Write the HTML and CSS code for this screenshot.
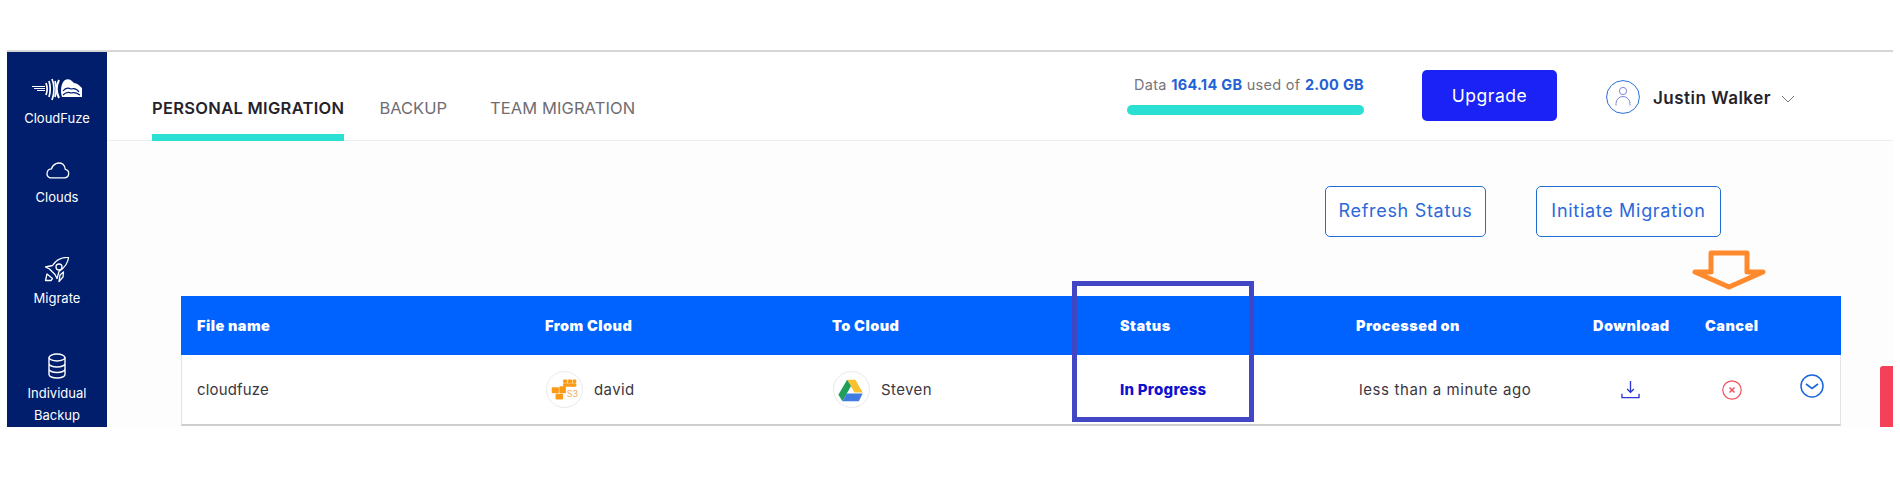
FILE: index.html
```html
<!DOCTYPE html>
<html lang="en">
<head>
<meta charset="utf-8">
<title>CloudFuze - Personal Migration</title>
<link rel="stylesheet" href="styles.css">
</head>
<body>
<div class="screen">
  <nav class="sidebar">
    <a class="nav-item nav-brand">
      <svg class="ico-logo" viewBox="0 0 52 24" fill="none" stroke="#fff">
        <path d="M1 9.500h13M3 11.500h11M6 13.500h8" stroke-width="1"/>
        <path d="M15 6c1.500 4 1.500 8 0 12M18 4c1.500 5 1.500 11 0 16M21 2c2.500 6 2.500 14 0 21M24 4c1.500 5 1.500 11 0 16" stroke-width="1.700"/>
        <path d="M28 3c-3 6-3 12 0 18" stroke-width="2"/>
        <path d="M31 20c-2-6-1-14 3-17 4-2 7 1 9 3 3 0 6 3 8 5v9z" fill="#fff" stroke="none"/>
        <path d="M32 14c3-4 6-3 8-2 3-1 6 0 8 3M32 18c3-3 6-3 8-2 3-1 6 0 9 2" stroke="#001e6c" stroke-width="1.200"/>
      </svg>
      <span>CloudFuze</span>
    </a>
    <a class="nav-item nav-clouds">
      <svg class="ico-cloud" viewBox="0 0 26 18" fill="none" stroke="#fff" stroke-width="1.300">
        <path d="M6 16.800h14.500a4.300 4.300 0 0 0 .8-8.500 8 8 0 0 0-2.300-5 7.500 7.500 0 0 0-11.500 4.600 4.600 4.600 0 0 0-1.500 8.900z"/>
      </svg>
      <span>Clouds</span>
    </a>
    <a class="nav-item nav-migrate">
      <svg class="ico-rocket" viewBox="0 0 26 26" fill="none" stroke="#fff" stroke-width="1.300" stroke-linejoin="round">
        <path d="M24.500 1c-7-.5-12 2-16 8l-7 1.500 4 2 5.500 5.500 2 4 2-7c5-3.500 9-7.500 9.500-14z" transform="translate(0 -.5)"/>
        <circle cx="15" cy="10" r="3"/>
        <path d="M3 17l-1.500 6.500h5.500l1.500-2zM16 18l-1 6.500 4-4.500.5-5z"/>
      </svg>
      <span>Migrate</span>
    </a>
    <a class="nav-item nav-backup">
      <svg class="ico-db" viewBox="0 0 18 26" fill="none" stroke="#fff" stroke-width="1.400">
        <ellipse cx="9" cy="4.500" rx="8" ry="3.500"/>
        <path d="M1 4.500v17c0 2 3.500 3.500 8 3.500s8-1.500 8-3.500v-17M1 10.500c0 2 3.500 3.500 8 3.500s8-1.500 8-3.500M1 16c0 2 3.500 3.500 8 3.500s8-1.500 8-3.500"/>
      </svg>
      <span>Individual<br>Backup</span>
    </a>
  </nav>

  <div class="main">
    <header class="topbar">
      <div class="tabs">
        <a class="tab tab-active">PERSONAL MIGRATION</a>
        <a class="tab">BACKUP</a>
        <a class="tab">TEAM MIGRATION</a>
      </div>
      <div class="usage">
        <p class="usage-text">Data <b>164.14 GB</b> used of <b>2.00 GB</b></p>
        <div class="usage-bar"></div>
      </div>
      <button class="btn-upgrade">Upgrade</button>
      <div class="user">
        <svg class="ico-user" viewBox="0 0 34 34" fill="none">
          <circle cx="17" cy="17" r="16.400" stroke="#2a6fd6" stroke-width="1"/>
          <circle cx="17" cy="11" r="3.600" stroke="#7f86dc" stroke-width="1"/>
          <path d="M10 25.500v-2a7 7 0 0 1 14 0v2" stroke="#7f86dc" stroke-width="1"/>
        </svg>
        <span class="user-name">Justin Walker</span>
        <svg class="ico-chev" viewBox="0 0 14 8" fill="none" stroke="#777" stroke-width="1"><path d="M1 1l6 6 6-6"/></svg>
      </div>
    </header>

    <section class="content">
      <div class="actions">
        <button class="btn-outline btn-refresh">Refresh Status</button>
        <button class="btn-outline btn-initiate">Initiate Migration</button>
      </div>
      <div class="table">
        <div class="row row-head">
          <div>File name</div>
          <div>From Cloud</div>
          <div>To Cloud</div>
          <div>Status</div>
          <div>Processed on</div>
          <div>Download</div>
          <div>Cancel</div>
          <div></div>
        </div>
        <div class="row row-body">
          <div>cloudfuze</div>
          <div class="cloud-cell">
            <span class="cloud-badge">
              <svg viewBox="0 0 37 37">
                <g fill="#fb9a14">
                  <rect x="17" y="8" width="4.500" height="3.500" rx="1"/><rect x="22" y="8" width="4.500" height="3.500" rx="1"/><rect x="27" y="8" width="4" height="3.500" rx="1"/>
                  <rect x="17" y="12" width="14" height="3.500" rx="1"/>
                  <rect x="5" y="16" width="7.500" height="6.500" rx="1"/><rect x="13" y="15" width="7" height="7.500" rx="1"/>
                  <rect x="9" y="23" width="8" height="6" rx="1"/>
                </g>
                <text class="s3-mark" x="21" y="26">S3</text>
              </svg>
            </span>
            <span>david</span>
          </div>
          <div class="cloud-cell">
            <span class="cloud-badge">
              <svg viewBox="0 0 36 36">
                <path d="M13.500 8h8.500l7.500 13h-8.500z" fill="#fbc02d"/>
                <path d="M13.500 8l-9 15.500 4.200 6.500 8.800-15.500z" fill="#1e9e57"/>
                <path d="M8.700 30l4.300-8h16.500l-4 8z" fill="#3f7be0"/>
              </svg>
            </span>
            <span>Steven</span>
          </div>
          <div class="status">In Progress</div>
          <div class="processed">less than a minute ago</div>
          <div class="cell-icon cell-download">
            <svg class="ico-download" viewBox="0 0 20 20" fill="none" stroke="#2b35d6" stroke-width="1.400">
              <path d="M10 1v12M6.500 9.500l3.500 3.500 3.500-3.500M1 14.500v4h18v-4"/>
            </svg>
          </div>
          <div class="cell-icon cell-cancel">
            <svg class="ico-cancel" viewBox="0 0 20 20" fill="none" stroke="#f0525f">
              <circle cx="10" cy="10" r="9.200" stroke-width="1.200"/>
              <path d="M7.500 7.500l5 5M12.500 7.500l-5 5" stroke-width="1.500"/>
            </svg>
          </div>
          <div class="cell-icon">
            <svg class="ico-expand" viewBox="0 0 24 24" fill="none" stroke="#1c66dc" stroke-width="1.500">
              <circle cx="12" cy="12" r="11"/>
              <path d="M6 10l6 4.500 6-4.500" stroke-width="1.700"/>
            </svg>
          </div>
        </div>
      </div>
    </section>
  </div>

  <div class="status-highlight"></div>
  <svg class="arrow" viewBox="0 0 74 40" fill="none" stroke="#ff8a2d" stroke-width="5" stroke-linejoin="round">
    <path d="M19 3h36v19h16l-34 15-34-15h16z"/>
  </svg>
  <div class="side-flag"></div>
</div>
</body>
</html>
```
FILE: styles.css
```css
* { box-sizing: border-box; }
html, body { margin: 0; height: 100%; background: #fff; overflow: hidden; }
body { padding: 50px 7px 0; font-family: "Inter", "Liberation Sans", sans-serif; color: #2c2833; }
p { margin: 0; }
button { font-family: inherit; cursor: pointer; }

.screen {
  position: relative;
  display: flex;
  height: 377px;
  border-top: 2px solid #d6d6d6;
  overflow: hidden;
  background: #fdfdfe;
}

.sidebar {
  flex: 0 0 100px;
  background: #001e6c;
  color: #fff;
  text-align: center;
  font-size: 13px;
  line-height: 22px;
}
.nav-item { display: flex; flex-direction: column; align-items: center; }
.nav-item svg { display: block; }
.nav-brand { padding-top: 25px; }
.ico-logo { width: 52px; height: 24px; margin-bottom: 6px; }
.nav-clouds { padding-top: 32px; }
.ico-cloud { width: 26px; height: 18px; margin-bottom: 7px; }
.nav-migrate { padding-top: 49px; }
.ico-rocket { width: 26px; height: 26px; margin-bottom: 4px; }
.nav-backup { padding-top: 44px; }
.ico-db { width: 18px; height: 26px; margin-bottom: 3px; }

.main { flex: 1; display: flex; flex-direction: column; min-width: 0; }

.topbar {
  display: flex;
  align-items: stretch;
  height: 89px;
  padding-left: 45px;
  background: #fff;
  border-bottom: 1px solid #efeff2;
}
.tabs { display: flex; gap: 35px; align-items: stretch; }
.tab {
  display: flex;
  align-items: center;
  height: 89px;
  padding-top: 30px;
  font-size: 16.500px;
  color: #6f6d72;
  border-bottom: 7px solid transparent;
}
.tab:nth-child(3) { margin-left: 8px; letter-spacing: .1px; }
.tab-active { font-weight: 600; color: #25222c; border-bottom-color: #2bdfd2; letter-spacing: .3px; }

.usage { margin-left: auto; width: 237px; padding-top: 23px; }
.usage-text { text-align: right; font-size: 14.500px; line-height: 19px; letter-spacing: .3px; color: #77757b; white-space: nowrap; }
.usage-text b { color: #1f62d6; font-weight: 700; }
.usage-bar { height: 10px; margin-top: 11px; border-radius: 5px; background: #2bdfd2; }

.btn-upgrade {
  align-self: flex-start;
  width: 135px;
  height: 51px;
  margin: 18px 0 0 58px;
  border: 0;
  border-radius: 5px;
  background: #1a22f5;
  color: #fff;
  font-size: 17.500px;
  letter-spacing: .5px;
}

.user { flex: 0 0 287px; display: flex; align-items: flex-start; margin-left: 49px; padding-top: 28px; }
.ico-user { width: 34px; height: 34px; display: block; }
.user-name { margin: 8px 0 0 13px; font-size: 17px; line-height: 20px; font-weight: 600; color: #25222c; letter-spacing: .5px; white-space: nowrap; }
.ico-chev { width: 14px; height: 8px; margin: 15px 0 0 10px; display: block; }

.content { flex: 1; padding: 45px 0 0 74px; }
.actions { display: flex; gap: 50px; padding-left: 1144px; }
.btn-outline {
  height: 51px;
  padding: 0 0 2px;
  border: 1px solid #1e6fd0;
  border-radius: 5px;
  background: #fff;
  color: #2c68da;
  font-size: 18px;
  letter-spacing: .7px;
  white-space: nowrap;
}
.btn-refresh { width: 161px; }
.btn-initiate { width: 185px; }

.table { width: 1660px; margin-top: 59px; }
.row {
  display: grid;
  grid-template-columns: 348px 287px 288px 236px 237px 112px 120px 16px;
  align-items: center;
  padding-left: 16px;
  white-space: nowrap;
}
.row-head { height: 59px; background: #0062ff; color: #fff; font-size: 14.500px; font-weight: 900; letter-spacing: .45px; }
.row-body {
  height: 71px;
  background: #fff;
  border-left: 1px solid #e4e4e8;
  border-right: 1px solid #e4e4e8;
  border-bottom: 2px solid #cfcfd2;
  padding-left: 15px;
  font-size: 15px;
  letter-spacing: .15px;
  color: #3b3742;
}
.cloud-cell { display: flex; align-items: center; gap: 11px; padding-left: 1px; letter-spacing: .4px; }
.cloud-badge {
  flex: 0 0 37px;
  height: 37px;
  border-radius: 50%;
  background: #fff;
  border: 1px solid #e9e9ee;
  display: block;
  overflow: hidden;
}
.cloud-badge svg { width: 100%; height: 100%; display: block; }
.s3-mark { font-size: 9.500px; fill: #f2a95a; letter-spacing: 0; }
.status { color: #1010d0; font-weight: 800; font-size: 15px; letter-spacing: .25px; }
.processed { padding-left: 3px; letter-spacing: .6px; }
.cell-icon { display: flex; }
.cell-download { padding-left: 28px; margin-top: -1px; }
.cell-cancel { padding-left: 18px; }
.ico-download { width: 19px; height: 19px; }
.ico-cancel { width: 20px; height: 20px; margin-left: -1px; }
.ico-expand { width: 24px; height: 24px; margin: -7px 0 0 -25px; }

/* Annotations and overlays drawn over the page */
.status-highlight {
  position: absolute;
  left: 1065px;
  top: 229px;
  width: 182px;
  height: 141px;
  border: 5px solid #4046c4;
}
.arrow {
  position: absolute;
  left: 1685px;
  top: 198px;
  width: 74px;
  height: 40px;
}
.side-flag {
  position: absolute;
  left: 1873px;
  top: 314px;
  width: 13px;
  height: 61px;
  border-radius: 3px 0 0 0;
  background: #f44059;
}
```
